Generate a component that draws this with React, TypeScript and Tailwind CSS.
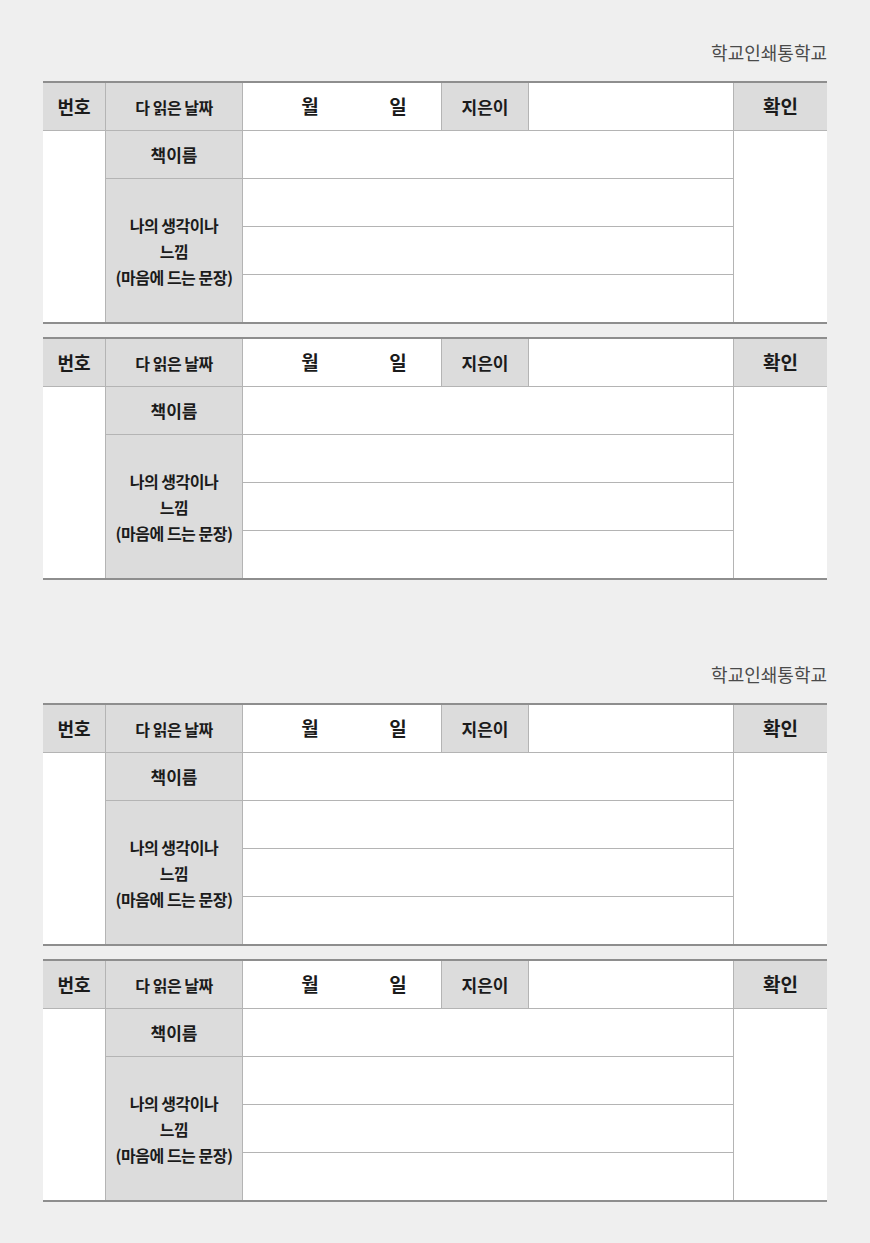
const FONT = "font-['Noto_Sans_CJK_KR','Noto_Sans',sans-serif]";

function Cell({ className = "", children }: { className?: string; children?: React.ReactNode }) {
  return <div className={`flex items-center justify-center ${className}`}>{children}</div>;
}

function ReadingTable() {
  const gray = "bg-[#dcdcdc]";
  const white = "bg-white";
  return (
    <div className="grid grid-cols-[62px_136px_198px_86px_204px_93px] grid-rows-[47px_47px_47px_47px_47px] gap-px bg-[#b4b4b4] border-y-2 border-[#8e8e8e] text-[#1b1b1b] font-bold">
      {/* header */}
      <Cell className={`${gray} text-[18px]`}>번호</Cell>
      <Cell className={`${gray} text-[16px] tracking-[-0.5px]`}>다 읽은 날짜</Cell>
      <div className={`${white} flex items-center pl-[49px] text-[19px]`}>
        <span className="w-[36px] text-center">월</span>
        <span className="ml-[52px] w-[36px] text-center">일</span>
      </div>
      <Cell className={`${gray} text-[17px]`}>지은이</Cell>
      <div className={white} />
      <Cell className={`${gray} text-[19px]`}>확인</Cell>

      {/* body */}
      <div className={`${white} row-span-4`} />
      <Cell className={`${gray} text-[17px]`}>책이름</Cell>
      <div className={`${white} col-span-3`} />
      <div className={`${white} row-span-4`} />

      <Cell className={`${gray} row-span-3 flex-col text-[16px] leading-[26px] tracking-[-0.5px]`}>
        <span>나의 생각이나</span>
        <span>느낌</span>
        <span>(마음에 드는 문장)</span>
      </Cell>
      <div className={`${white} col-span-3`} />
      <div className={`${white} col-span-3`} />
      <div className={`${white} col-span-3`} />
    </div>
  );
}

function Half() {
  return (
    <section className="h-[622px] pt-[40px]">
      <div className="text-right text-[18px] leading-[24px] text-[#4a4a4a]">학교인쇄통학교</div>
      <div className="mt-[17px] flex flex-col gap-[13px]">
        <ReadingTable />
        <ReadingTable />
      </div>
    </section>
  );
}

export default function App() {
  return (
    <main className={`min-h-[1243px] w-[870px] bg-[#efefef] pl-[43px] ${FONT}`}>
      <div className="w-[784px]">
        <Half />
        <Half />
      </div>
    </main>
  );
}
